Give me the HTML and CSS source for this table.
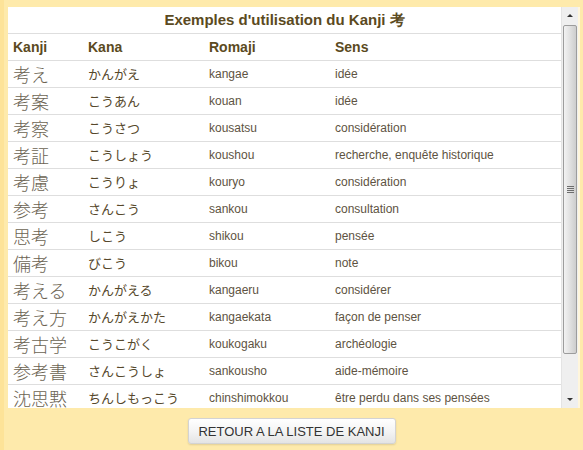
FILE: index.html
```html
<!DOCTYPE html>
<html lang="fr">
<head>
<meta charset="utf-8">
<title>Exemples d'utilisation du Kanji 考</title>
<link rel="stylesheet" href="styles.css">
</head>
<body>
<div class="page">
  <div class="panel">
    <div class="viewport">
      <table class="kanji-table">
        <colgroup>
          <col class="c-kanji"><col class="c-kana"><col class="c-romaji"><col class="c-sens">
        </colgroup>
        <thead>
          <tr><th colspan="4" class="title">Exemples d'utilisation du Kanji 考</th></tr>
          <tr class="head"><th>Kanji</th><th>Kana</th><th>Romaji</th><th>Sens</th></tr>
        </thead>
        <tbody>
          <tr><td class="kanji">考え</td><td class="kana">かんがえ</td><td>kangae</td><td>idée</td></tr>
          <tr><td class="kanji">考案</td><td class="kana">こうあん</td><td>kouan</td><td>idée</td></tr>
          <tr><td class="kanji">考察</td><td class="kana">こうさつ</td><td>kousatsu</td><td>considération</td></tr>
          <tr><td class="kanji">考証</td><td class="kana">こうしょう</td><td>koushou</td><td>recherche, enquête historique</td></tr>
          <tr><td class="kanji">考慮</td><td class="kana">こうりょ</td><td>kouryo</td><td>considération</td></tr>
          <tr><td class="kanji">参考</td><td class="kana">さんこう</td><td>sankou</td><td>consultation</td></tr>
          <tr><td class="kanji">思考</td><td class="kana">しこう</td><td>shikou</td><td>pensée</td></tr>
          <tr><td class="kanji">備考</td><td class="kana">びこう</td><td>bikou</td><td>note</td></tr>
          <tr><td class="kanji">考える</td><td class="kana">かんがえる</td><td>kangaeru</td><td>considérer</td></tr>
          <tr><td class="kanji">考え方</td><td class="kana">かんがえかた</td><td>kangaekata</td><td>façon de penser</td></tr>
          <tr><td class="kanji">考古学</td><td class="kana">こうこがく</td><td>koukogaku</td><td>archéologie</td></tr>
          <tr><td class="kanji">参考書</td><td class="kana">さんこうしょ</td><td>sankousho</td><td>aide-mémoire</td></tr>
          <tr><td class="kanji">沈思黙</td><td class="kana">ちんしもっこう</td><td>chinshimokkou</td><td>être perdu dans ses pensées</td></tr>
        </tbody>
      </table>
    </div>
    <div class="scrollbar" aria-hidden="true">
      <div class="sb-btn"><span class="arrow-up"></span></div>
      <div class="sb-track">
        <div class="sb-thumb"><span class="grip"></span></div>
      </div>
      <div class="sb-btn"><span class="arrow-down"></span></div>
    </div>
  </div>
  <div class="actions">
    <button class="back-btn" type="button">RETOUR A LA LISTE DE KANJI</button>
  </div>
</div>
</body>
</html>
```

FILE: styles.css
```css
html, body {
  margin: 0;
  padding: 0;
}
body {
  width: 583px;
  height: 450px;
  overflow: hidden;
  background: linear-gradient(to right, #fde398 0, #fde398 4px, #feeaab 4px);
  font-family: "Liberation Sans", Arial, sans-serif;
}
.page {
  padding: 7px 0 0 8px;
}
.panel {
  display: flex;
  width: 570px;
  height: 401px;
  background: #fff;
  border-right: 2px solid #fff6dc;
}
.viewport {
  width: 553px;
  height: 401px;
  overflow: hidden;
}
.kanji-table {
  width: 553px;
  border-collapse: collapse;
  table-layout: fixed;
  color: #5e5342;
  font-size: 12px;
}
.c-kanji { width: 75px; }
.c-kana { width: 121px; }
.c-romaji { width: 126px; }
.c-sens { width: 231px; }
.kanji-table th,
.kanji-table td {
  height: 26px;
  padding: 0 0 0 5px;
  line-height: 26px;
  border-bottom: 1px solid #dedede;
  text-align: left;
  vertical-align: middle;
  white-space: nowrap;
  overflow: hidden;
}
.kanji-table th {
  font-size: 14px;
  font-weight: bold;
  color: #5b4a21;
}
.kanji-table th.title {
  text-align: center;
  padding: 0;
  font-size: 15px;
}
.kanji-table td.kanji {
  font-family: "Noto Sans CJK JP", "Liberation Sans", sans-serif;
  font-size: 18px;
  font-weight: 300;
  color: #6b6352;
}
.kanji-table td.kana {
  font-family: "Noto Sans CJK JP", "Liberation Sans", sans-serif;
  font-size: 13px;
  font-weight: 400;
  color: #56482b;
}
.scrollbar {
  width: 17px;
  height: 401px;
  display: flex;
  flex-direction: column;
  background: #efefef;
  border-left: 1px solid #e4e4e4;
  box-sizing: border-box;
}
.sb-btn {
  height: 17px;
  display: flex;
  align-items: center;
  justify-content: center;
}
.arrow-up {
  width: 0;
  height: 0;
  border-left: 3px solid transparent;
  border-right: 3px solid transparent;
  border-bottom: 3px solid #333;
}
.arrow-down {
  width: 0;
  height: 0;
  border-left: 3px solid transparent;
  border-right: 3px solid transparent;
  border-top: 3px solid #333;
}
.sb-track {
  flex: 1;
  display: flex;
  flex-direction: column;
}
.sb-thumb {
  height: 329px;
  margin: 1px 1px 0 1px;
  border: 1px solid #9c9c9c;
  border-radius: 2px;
  background: linear-gradient(to right, #f2f2f2 0%, #e2e2e2 45%, #cdcdcd 100%);
  display: flex;
  align-items: center;
  justify-content: center;
  box-sizing: border-box;
}
.grip {
  width: 7px;
  height: 7px;
  background: repeating-linear-gradient(to bottom, #6d6d6d 0, #6d6d6d 1px, transparent 1px, transparent 2px);
}
.actions {
  display: flex;
  justify-content: center;
  margin: 10px 0 0 -8px;
}
.back-btn {
  width: 208px;
  height: 26px;
  padding: 0 8px;
  font-family: "Liberation Sans", Arial, sans-serif;
  font-size: 13px;
  color: #333;
  background: linear-gradient(to bottom, #ffffff 0%, #f3f3f3 55%, #e4e4e4 100%);
  border: 1px solid #d3d3d3;
  border-radius: 3px;
  box-shadow: 0 1px 2px rgba(0, 0, 0, 0.12);
}
```
